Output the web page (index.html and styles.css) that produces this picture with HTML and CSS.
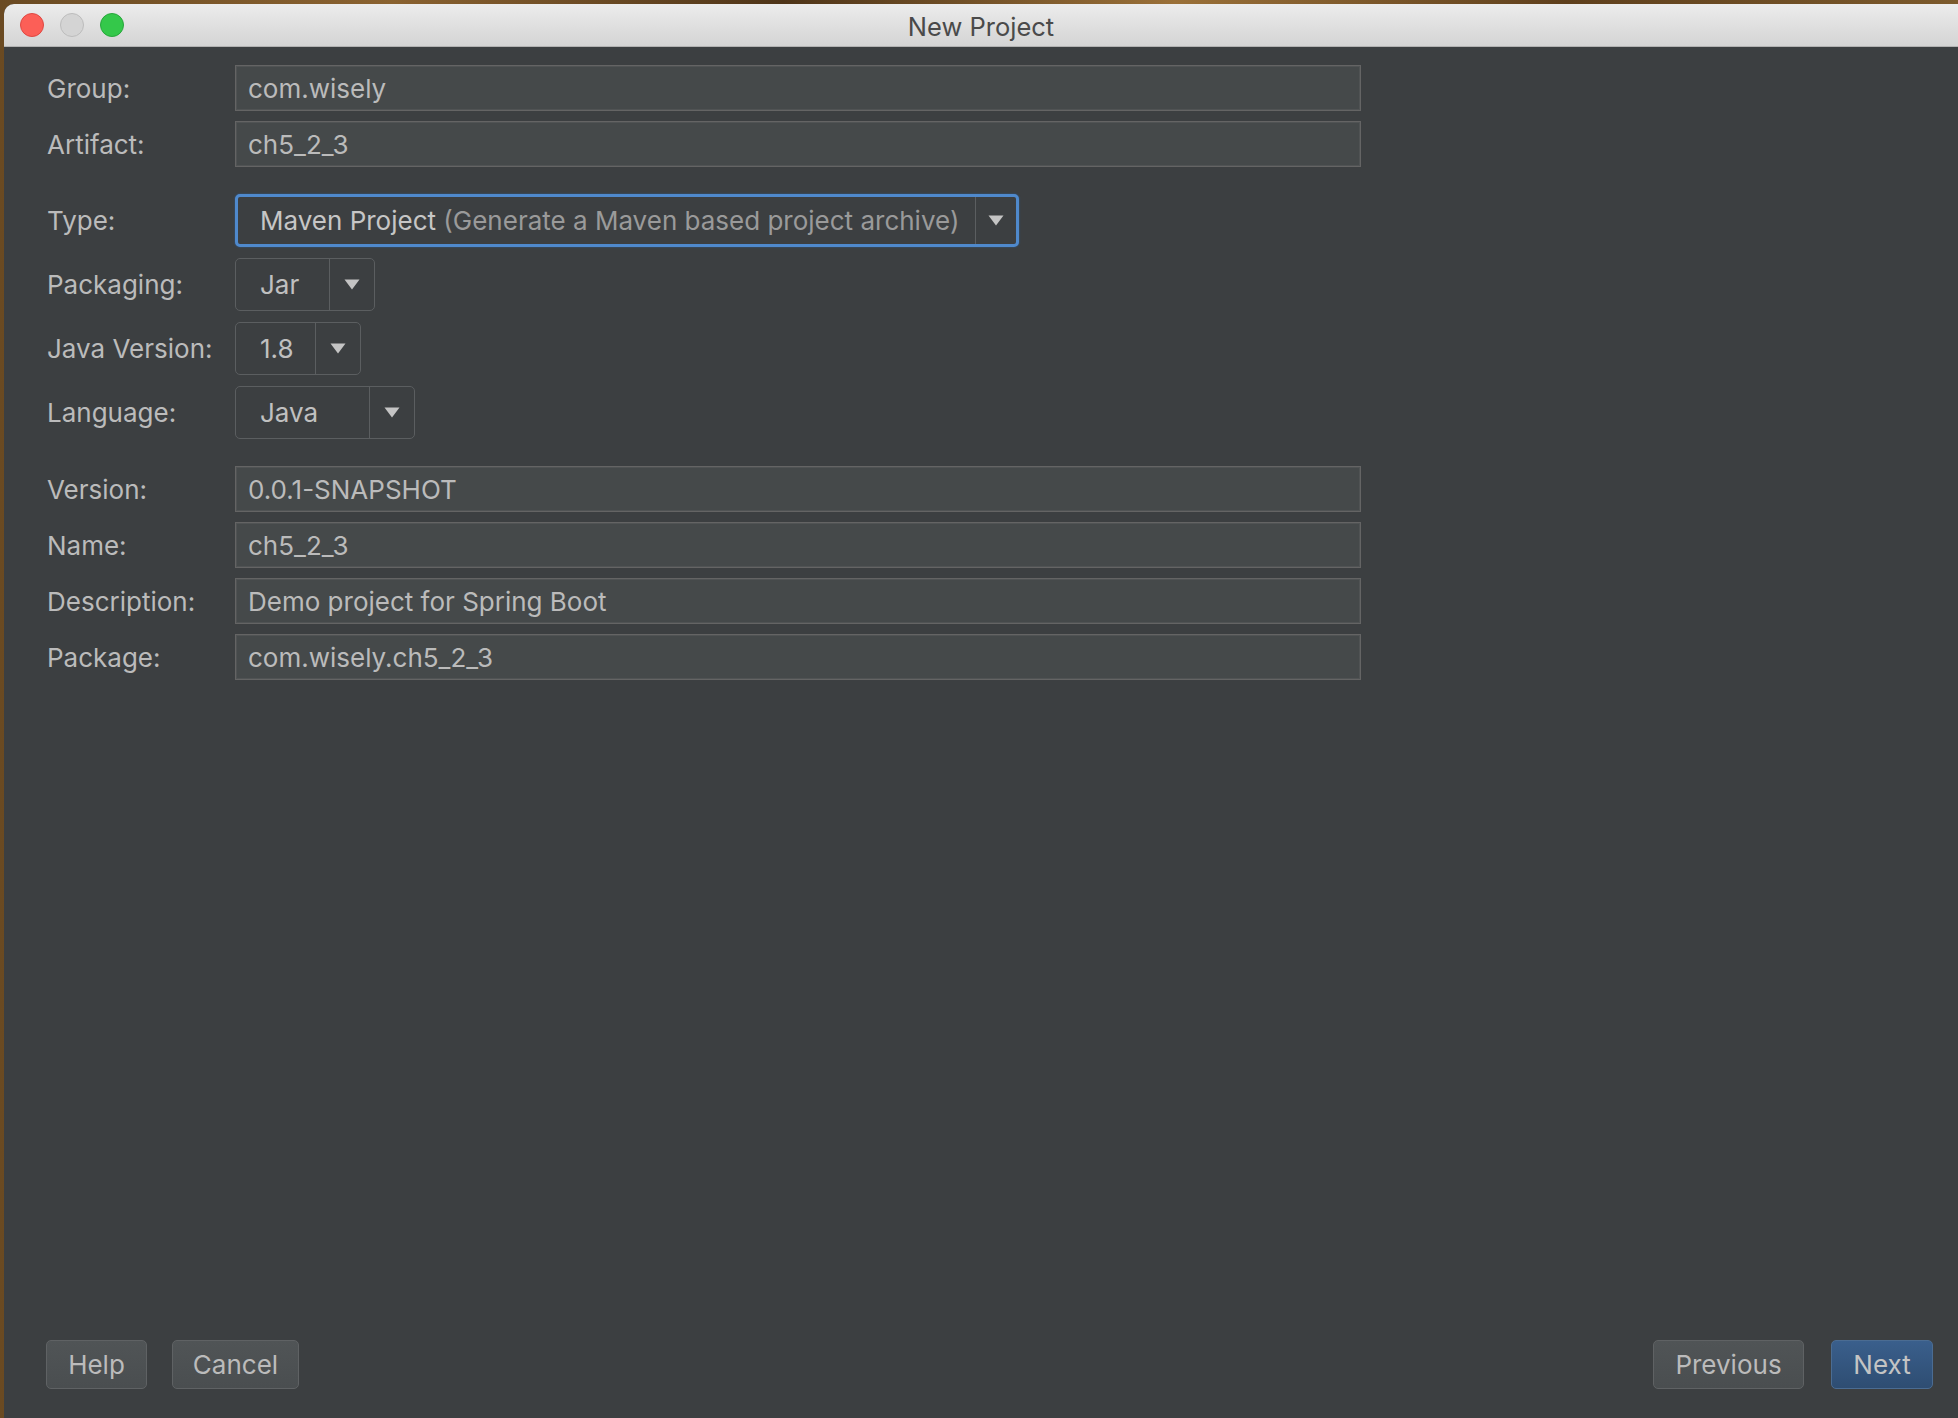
FILE: index.html
```html
<!DOCTYPE html>
<html lang="en">
<head>
<meta charset="utf-8">
<title>New Project</title>
<link rel="stylesheet" href="styles.css">
</head>
<body>
<div class="desktop">
  <div class="window">
    <div class="titlebar">
      <div class="lights">
        <span class="light light-close"></span>
        <span class="light light-min"></span>
        <span class="light light-max"></span>
      </div>
      <div class="title">New Project</div>
      <div class="titlebar-spacer"></div>
    </div>
    <div class="content">
      <div class="form">
        <div class="section">
          <div class="row"><span class="label">Group:</span><div class="field">com.wisely</div></div>
          <div class="row"><span class="label">Artifact:</span><div class="field">ch5_2_3</div></div>
        </div>
        <div class="section section-combos">
          <div class="row">
            <span class="label">Type:</span>
            <div class="combo combo-type combo-focused">
              <div class="combo-value"><span class="combo-main">Maven Project</span>&nbsp;<span class="combo-hint">(Generate a Maven based project archive)</span></div>
              <div class="combo-arrow"><svg width="16" height="11" viewBox="0 0 16 11"><path d="M0.5 0.5 H15.5 L8 10.5 Z" fill="#c4c4c4"/></svg></div>
            </div>
          </div>
          <div class="row">
            <span class="label">Packaging:</span>
            <div class="combo combo-packaging">
              <div class="combo-value">Jar</div>
              <div class="combo-arrow"><svg width="16" height="11" viewBox="0 0 16 11"><path d="M0.5 0.5 H15.5 L8 10.5 Z" fill="#c4c4c4"/></svg></div>
            </div>
          </div>
          <div class="row">
            <span class="label">Java Version:</span>
            <div class="combo combo-java">
              <div class="combo-value">1.8</div>
              <div class="combo-arrow"><svg width="16" height="11" viewBox="0 0 16 11"><path d="M0.5 0.5 H15.5 L8 10.5 Z" fill="#c4c4c4"/></svg></div>
            </div>
          </div>
          <div class="row">
            <span class="label">Language:</span>
            <div class="combo combo-language">
              <div class="combo-value">Java</div>
              <div class="combo-arrow"><svg width="16" height="11" viewBox="0 0 16 11"><path d="M0.5 0.5 H15.5 L8 10.5 Z" fill="#c4c4c4"/></svg></div>
            </div>
          </div>
        </div>
        <div class="section">
          <div class="row"><span class="label">Version:</span><div class="field">0.0.1-SNAPSHOT</div></div>
          <div class="row"><span class="label">Name:</span><div class="field">ch5_2_3</div></div>
          <div class="row"><span class="label">Description:</span><div class="field">Demo project for Spring Boot</div></div>
          <div class="row"><span class="label">Package:</span><div class="field">com.wisely.ch5_2_3</div></div>
        </div>
      </div>
      <div class="footer">
        <div class="btn-group">
          <button class="btn btn-help">Help</button>
          <button class="btn btn-cancel">Cancel</button>
        </div>
        <div class="btn-group btn-group-right">
          <button class="btn btn-prev">Previous</button>
          <button class="btn btn-primary btn-next">Next</button>
        </div>
      </div>
    </div>
  </div>
</div>
</body>
</html>
```
FILE: styles.css
```css
html, body {
  margin: 0;
  padding: 0;
  height: 100%;
}

body {
  overflow: hidden;
  font-family: "Inter", "Liberation Sans", sans-serif;
  background: #5b3d1d;
}

.desktop {
  width: 1958px;
  height: 1418px;
  box-sizing: border-box;
  padding: 4px 0 0 4px;
  background:
    linear-gradient(90deg, #6a4a22 0%, #8a6230 20%, #4e3418 40%, #9a7038 60%, #5e3f1c 80%, #7c5a2c 100%);
}

.window {
  height: 1414px;
  display: flex;
  flex-direction: column;
  background: #3c3f41;
  border-top-left-radius: 10px;
  overflow: hidden;
}

/* Title bar */
.titlebar {
  flex: none;
  height: 43px;
  box-sizing: border-box;
  display: grid;
  grid-template-columns: 1fr auto 1fr;
  align-items: center;
  background: linear-gradient(#ececec, #d4d4d4);
  border-bottom: 1px solid #b2b2b2;
}

.lights {
  display: flex;
  gap: 16px;
  padding-left: 16px;
  align-items: center;
}

.light {
  width: 24px;
  height: 24px;
  box-sizing: border-box;
  border-radius: 50%;
}

.light-close {
  background: #fc5f57;
  border: 1px solid #de4842;
}

.light-min {
  background: #d4d4d4;
  border: 1px solid #bcbcbc;
}

.light-max {
  background: #34c84a;
  border: 1px solid #27a63b;
}

.title {
  font-size: 25.5px;
  color: #4a4a4a;
  padding-top: 2px;
}

/* Content */
.content {
  flex: 1;
  display: flex;
  flex-direction: column;
  justify-content: space-between;
}

.form {
  padding: 18px 0 0 43px;
  display: flex;
  flex-direction: column;
  gap: 27px;
}

.section {
  display: flex;
  flex-direction: column;
  gap: 10px;
}

.section-combos {
  gap: 11px;
}

.row {
  display: flex;
  align-items: center;
}

.label {
  width: 188px;
  flex: none;
  font-size: 26px;
  color: #bbbbbb;
}

.field {
  width: 1126px;
  height: 46px;
  box-sizing: border-box;
  display: flex;
  align-items: center;
  padding-left: 12px;
  background: #45494a;
  border: 1px solid #646464;
  box-shadow: inset 0 0 0 1px #505354;
  font-size: 26px;
  color: #bbbbbb;
}

/* Combo boxes */
.combo {
  height: 53px;
  box-sizing: border-box;
  display: flex;
  border: 1px solid #5b5e60;
  border-radius: 5px;
  background: #3c3f41;
}

.combo-value {
  flex: 1;
  display: flex;
  align-items: center;
  padding-left: 24px;
  border-right: 1px solid #5b5e60;
  font-size: 26px;
  color: #c0c0c0;
  white-space: nowrap;
}

.combo-arrow {
  width: 44px;
  flex: none;
  display: flex;
  align-items: center;
  justify-content: center;
}

.combo-type {
  width: 784px;
}

.combo-type .combo-arrow {
  width: 40px;
}

.combo-focused {
  border: 3px solid #4f89cc;
  box-shadow: 0 0 2px #2f5f96;
}

.combo-focused .combo-value {
  padding-left: 22px;
}

.combo-main {
  color: #c6c6c6;
}

.combo-hint {
  color: #9a9a9a;
}

.combo-packaging {
  width: 140px;
}

.combo-java {
  width: 126px;
}

.combo-language {
  width: 180px;
}

/* Footer buttons */
.footer {
  display: flex;
  justify-content: space-between;
  align-items: flex-end;
  padding: 0 25px 29px 42px;
}

.btn-group {
  display: flex;
  gap: 25px;
}

.btn-group-right {
  gap: 27px;
}

.btn {
  height: 49px;
  box-sizing: border-box;
  padding: 0;
  border: 1px solid #5f6264;
  border-radius: 5px;
  background: linear-gradient(#505456, #4a4e50);
  font-family: "Inter", "Liberation Sans", sans-serif;
  font-size: 26px;
  color: #bbbbbb;
}

.btn-help { width: 101px; }
.btn-cancel { width: 127px; }
.btn-prev { width: 151px; }
.btn-next { width: 102px; }

.btn-primary {
  background: linear-gradient(#3a5f8c, #2e4d72);
  border-color: #4b6c92;
  color: #c4c4c4;
}
```
